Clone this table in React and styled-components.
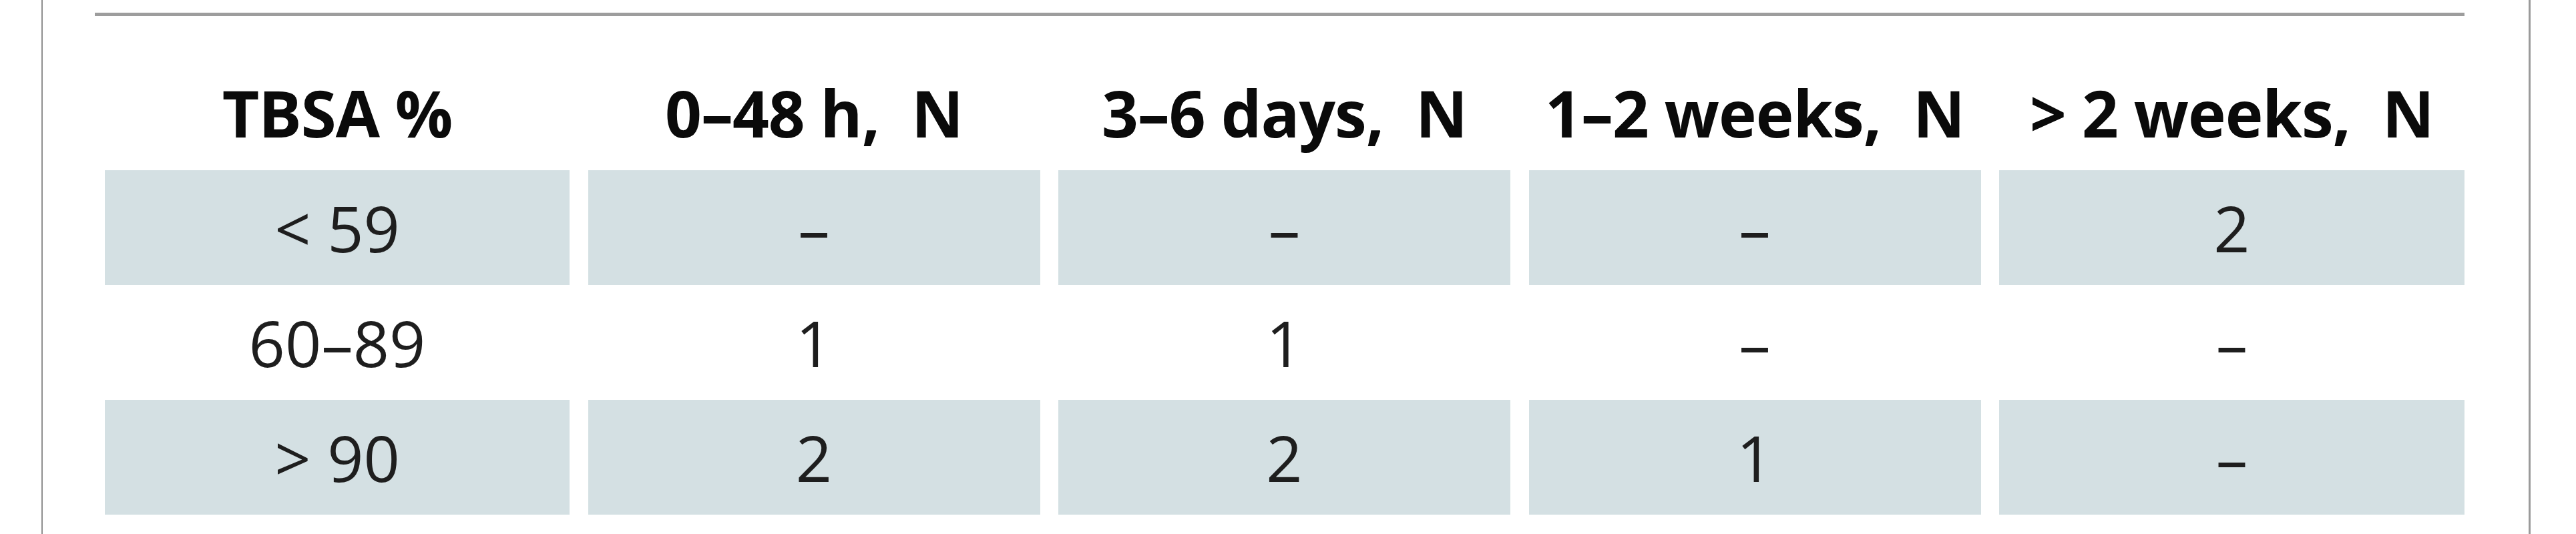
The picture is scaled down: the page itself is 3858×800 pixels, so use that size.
import React from 'react';
import styled, { createGlobalStyle } from 'styled-components';

const Global = createGlobalStyle`
  html, body { margin: 0; padding: 0; background: #ffffff; }
  body { font-family: "Open Sans", "Liberation Sans", sans-serif; }
`;

const Page = styled.div`
  width: 3858px;
  height: 800px;
  background: #ffffff;
  overflow: hidden;
`;

const Frame = styled.div`
  box-sizing: border-box;
  margin-left: 62px;
  width: 3728px;
  height: 800px;
  padding: 19px 96px 0 78px;
  border-left: 2px solid #8f8f8f;
  border-right: 3px solid #9a9a9a;
`;

const Table = styled.div`
  border-top: 5px solid #9d9d9d;
  padding-left: 15px;
`;

const Grid = styled.div`
  display: grid;
  grid-template-columns: 696px repeat(3, 677px) 697px;
  column-gap: 27.5px;
`;

const HeaderCell = styled.div`
  box-sizing: border-box;
  height: 231px;
  padding-bottom: 38px;
  display: flex;
  align-items: flex-end;
  justify-content: center;
  font-size: 96px;
  font-weight: 700;
  font-stretch: 88%;
  letter-spacing: -1px;
  line-height: 1;
  color: #0a0a0a;
  white-space: pre;
`;

const BodyCell = styled.div`
  height: 172px;
  display: flex;
  align-items: center;
  justify-content: center;
  background: ${(p) => (p.$shaded ? '#d4e0e3' : 'transparent')};
  font-size: 95px;
  font-weight: 400;
  font-stretch: 92%;
  line-height: 1;
  color: #1e1e1e;
  white-space: pre;
`;

const headers = ['TBSA %', '0–48 h,  N', '3–6 days,  N', '1–2 weeks,  N', '> 2 weeks,  N'];

const rows = [
  ['< 59', '–', '–', '–', '2'],
  ['60–89', '1', '1', '–', '–'],
  ['> 90', '2', '2', '1', '–'],
];

export default function App() {
  return (
    <Page>
      <Global />
      <Frame>
        <Table>
          <Grid>
            {headers.map((h) => (
              <HeaderCell key={h}>{h}</HeaderCell>
            ))}
            {rows.map((row, ri) =>
              row.map((v, ci) => (
                <BodyCell key={`${ri}-${ci}`} $shaded={ri % 2 === 0}>
                  {v}
                </BodyCell>
              ))
            )}
          </Grid>
        </Table>
      </Frame>
    </Page>
  );
}
